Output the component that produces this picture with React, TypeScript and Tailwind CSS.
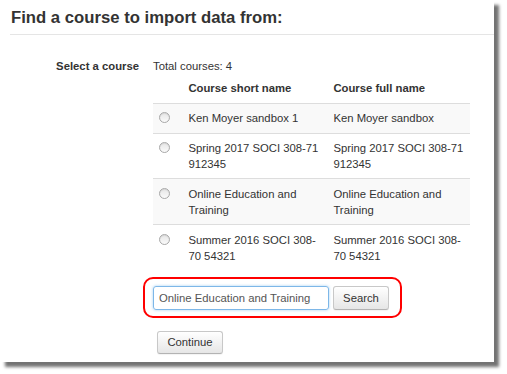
const courses = [
  { short: 'Ken Moyer sandbox 1', full: 'Ken Moyer sandbox' },
  { short: 'Spring 2017 SOCI 308-71 912345', full: 'Spring 2017 SOCI 308-71 912345' },
  { short: 'Online Education and Training', full: 'Online Education and Training' },
  { short: 'Summer 2016 SOCI 308-70 54321', full: 'Summer 2016 SOCI 308-70 54321' },
];

function Radio() {
  return (
    <span className="mt-[2px] block h-[11px] w-[11px] rounded-full border border-[#a9a9a9] bg-gradient-to-b from-[#e6e6e6] to-[#fafafa] shadow-[inset_0_1px_1px_rgba(0,0,0,0.08)]" />
  );
}

function Button({ label, className = '' }: { label: string; className?: string }) {
  return (
    <button
      type="button"
      className={`flex items-center justify-center rounded-[3px] border border-[#c8c8c8] border-b-[#b3b3b3] bg-gradient-to-b from-[#ffffff] to-[#e6e6e6] text-[11.3px] leading-[16px] text-[#333] shadow-[0_1px_1px_rgba(0,0,0,0.05)] ${className}`}
    >
      {label}
    </button>
  );
}

export default function App() {
  return (
    <div className="h-[374px] w-[507px] bg-white font-['Liberation_Sans',Arial,sans-serif] text-[#333]">
      <div className="h-[362px] w-[494px] bg-white shadow-[5px_5px_3px_rgba(0,0,0,0.55)]">
        <h2 className="ml-[10px] border-b border-[#e5e5e5] pt-[8px] pb-[6px] pl-[1px] text-[16.7px] font-bold leading-[20px] text-[#333]">
          Find a course to import data from:
        </h2>

        <div className="mt-[23px] flex text-[11.3px] leading-[16px]">
          <div className="w-[139px] text-right font-bold">Select a course</div>
          <div className="ml-[14px] flex flex-col">
            <div>Total courses: 4</div>

            <table className="w-[317px] table-fixed border-collapse">
              <colgroup>
                <col className="w-[29px]" />
                <col className="w-[145px]" />
                <col />
              </colgroup>
              <thead>
                <tr>
                  <th className="px-[6.4px] py-[6.4px]" />
                  <th className="px-[6.4px] py-[6.4px] text-left font-bold">Course short name</th>
                  <th className="px-[6.4px] py-[6.4px] text-left font-bold">Course full name</th>
                </tr>
              </thead>
              <tbody>
                {courses.map((c, i) => (
                  <tr key={c.short} className={i % 2 === 0 ? 'bg-[#f9f9f9]' : 'bg-white'}>
                    <td className="border-t border-[#dddddd] px-[6.4px] py-[6.4px] align-top">
                      <Radio />
                    </td>
                    <td className="border-t border-[#dddddd] px-[6.4px] py-[6.4px] align-top">{c.short}</td>
                    <td className="border-t border-[#dddddd] px-[6.4px] py-[6.4px] align-top">{c.full}</td>
                  </tr>
                ))}
              </tbody>
            </table>

            <div className="-ml-[10px] mt-[7px] flex w-[259px] items-center rounded-[10px] border-2 border-[#ff0000] pt-[7px] pb-[6px] pl-[8px]">
              <div className="flex h-[24px] w-[176px] items-center rounded-[3px] border border-[#7db7e8] pl-[5px] text-[#555] shadow-[0_0_3px_rgba(102,175,233,0.6)]">
                Online Education and Training
              </div>
              <Button label="Search" className="ml-[4px] h-[24px] w-[56px]" />
            </div>

            <Button label="Continue" className="ml-[4px] mt-[13px] h-[23px] w-[66px]" />
          </div>
        </div>
      </div>
    </div>
  );
}
